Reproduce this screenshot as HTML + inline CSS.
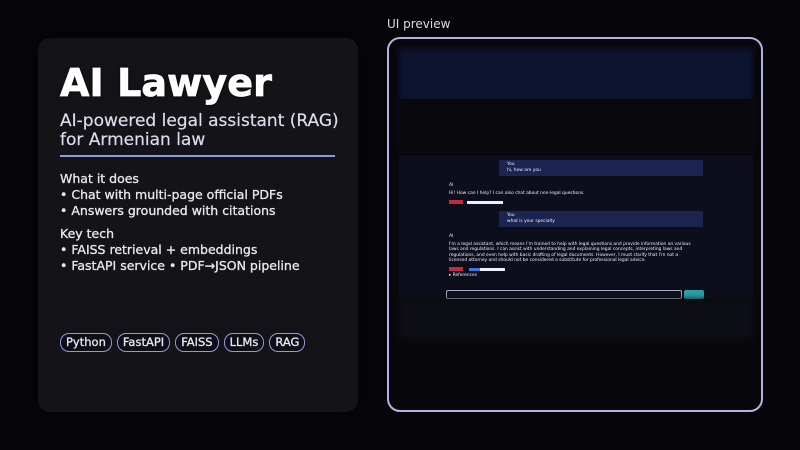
<!DOCTYPE html>
<html><head><meta charset="utf-8"><style>
*{margin:0;padding:0;box-sizing:border-box}
body{width:800px;height:450px;background:#060509;position:relative;overflow:hidden;font-family:"DejaVu Sans","Liberation Sans",sans-serif;color:#e6e6f0}
.card{position:absolute;left:38px;top:38px;width:320px;height:374px;background:#141318;border-radius:12px;box-shadow:0 0 16px rgba(0,0,0,.5)}
.t{position:absolute;left:60px;top:61px;font-size:38px;font-weight:bold;color:#fff;-webkit-text-stroke:0.8px #fff;text-shadow:0 0 3px #000;letter-spacing:0.1px}
.sub{position:absolute;left:60px;top:112px;font-size:17px;line-height:19px;color:#dcdcf0;-webkit-text-stroke:0.2px #dcdcf0}
.hr{position:absolute;left:60px;top:155px;width:275px;height:2px;background:#8e9ae0}
.sec{position:absolute;left:60px;font-size:12.5px;line-height:16px;color:#e8e8f0;-webkit-text-stroke:0.3px #e8e8f0}
.pills{position:absolute;left:60px;top:333px;display:flex;gap:5px}
.pill{border:1.5px solid #8e9ae0;border-radius:9px;height:19px;padding:0 5px;font-size:11.5px;line-height:16px;color:#e8e8f2;background:#0e0e16;-webkit-text-stroke:0.3px #e8e8f2}
.lbl{position:absolute;left:387px;top:17px;font-size:12px;color:#dcdce8}
.frame{position:absolute;left:387px;top:37px;width:376px;height:375px;border:2px solid #b5b2e0;border-radius:13px;background:#08070c;overflow:hidden}
.navy{position:absolute;left:10px;top:10px;width:354px;height:100px;background:linear-gradient(#0e1530,#0d1430 50%,#0a0c1a);filter:blur(3px)}
.chat{position:absolute;left:10px;top:116px;width:354px;height:144px;background:#0d0e1c}
.ub{position:absolute;background:#1c2452;height:16px;left:100px;width:204px;font-size:4.4px;line-height:5.5px;color:#eef;padding:2px 8px}
.tx{position:absolute;font-size:4.4px;line-height:5.3px;color:#eef;left:50px;white-space:nowrap}
.tag{position:absolute;background:#c8283f;height:4px;width:14px;left:50px}
.bar{position:absolute;background:#eef;height:3px;width:36px}
</style></head><body>
<div class="card"></div>
<div class="t">AI Lawyer</div>
<div class="sub">AI-powered legal assistant (RAG)<br>for Armenian law</div>
<div class="hr"></div>
<div class="sec" style="top:171px">What it does<br>• Chat with multi-page official PDFs<br>• Answers grounded with citations</div>
<div class="sec" style="top:226px">Key tech<br>• FAISS retrieval + embeddings<br>• FastAPI service • PDF→JSON pipeline</div>
<div class="pills"><div class="pill">Python</div><div class="pill">FastAPI</div><div class="pill">FAISS</div><div class="pill">LLMs</div><div class="pill">RAG</div></div>
<div class="lbl">UI preview</div>
<div class="frame">
 <div class="navy"></div>
 <div style="position:absolute;left:10px;top:60px;width:354px;height:55px;background:#08080d"></div>
 <div class="chat">
  <div class="ub" style="top:5px">You<br>hi, how are you</div>
  <div class="tx" style="top:28px">AI</div>
  <div class="tx" style="top:36px">Hi! How can I help? I can also chat about non-legal questions.</div>
  <div class="tag" style="top:45px"></div><div class="bar" style="left:68px;top:46px"></div>
  <div class="ub" style="top:56px">You<br>what is your specialty</div>
  <div class="tx" style="top:79px">AI</div>
  <div class="tx" style="top:87px">I'm a legal assistant, which means I'm trained to help with legal questions and provide information on various<br>laws and regulations. I can assist with understanding and explaining legal concepts, interpreting laws and<br>regulations, and even help with basic drafting of legal documents. However, I must clarify that I'm not a<br>licensed attorney and should not be considered a substitute for professional legal advice.</div>
  <div class="tag" style="top:112px"></div><div class="bar" style="left:70px;top:113px;background:linear-gradient(90deg,#3a7be0 30%,#eef 30%)"></div>
  <div class="tx" style="top:118px">▸ References</div>
 </div>
 <div style="position:absolute;left:57px;top:251px;width:236px;height:9px;border:1px solid #aab;border-radius:2px;background:#101020"></div>
 <div style="position:absolute;left:295px;top:251px;width:20px;height:9px;background:#2aa0a8;border-radius:2px"></div>
 <div style="position:absolute;left:10px;top:260px;width:354px;height:40px;background:#0e0e16;filter:blur(3px)"></div>
</div>
</body></html>
